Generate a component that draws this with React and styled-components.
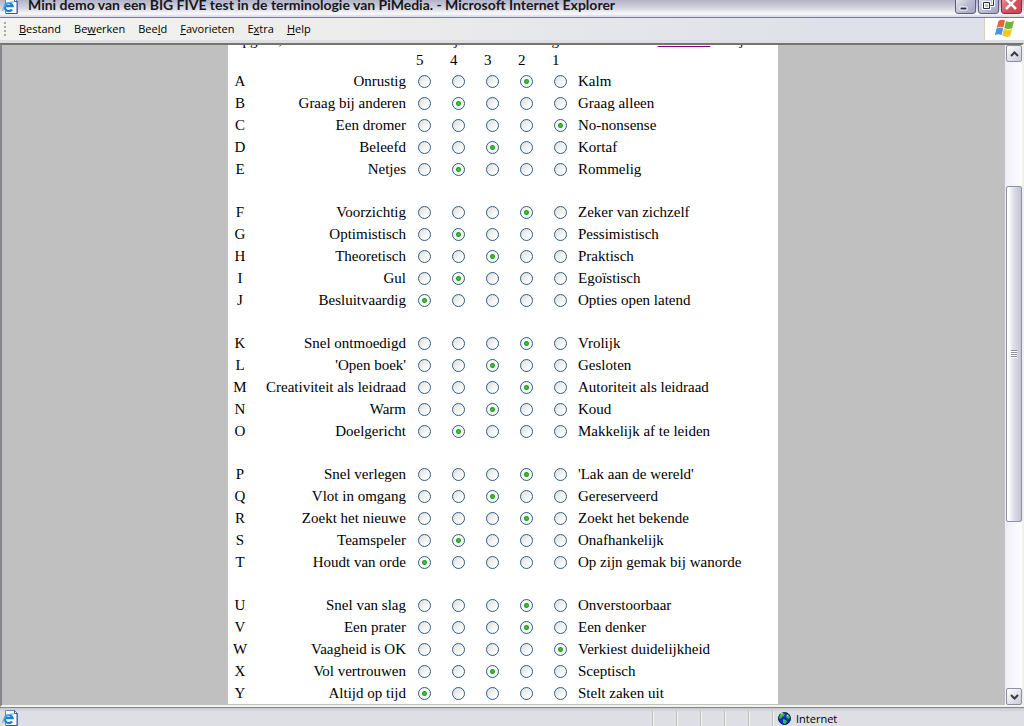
import React, { useState } from 'react'
import styled, { createGlobalStyle } from 'styled-components'

const GlobalStyle = createGlobalStyle`
    * {
        box-sizing: border-box;
    }
    body {
        margin: 0;
        overflow: hidden;
    }
    button {
        font: inherit;
        color: inherit;
        padding: 0;
    }
`

const Window = styled.div`
    display: flex;
    flex-direction: column;
    height: 100vh;
    background: #dedfe5;
    font-family: "Open Sans", Tahoma, sans-serif;
    font-size: 11px;
    color: #000;
`

const TitleBar = styled.header`
    display: flex;
    align-items: flex-end;
    flex: none;
    height: 18px;
    padding: 0 2px 3px;
    overflow: hidden;
    background: linear-gradient(#b3b3c8 0, #cfcfdc 7px, #fafafc 14px, #dcdce6 16px);
    border-bottom: 1px solid #7d7d96;
`

const Title = styled.h1`
    flex: 1;
    margin: 0 0 0 10px;
    font: bold 14px/18px Lato, sans-serif;
    color: #17171c;
    white-space: nowrap;
`

const WindowButtons = styled.div`
    display: flex;
    gap: 2px;
`

const WindowButton = styled.button`
    display: flex;
    width: 21px;
    height: 21px;
    border: 1px solid ${({ $close }) => ($close ? '#7d3048' : '#5e5e80')};
    border-radius: 3px;
    background: ${({ $close }) =>
        $close
            ? 'linear-gradient(135deg, #f0a0a0, #d4505a 60%, #c84650)'
            : 'linear-gradient(135deg, #f4f4fa, #b9b9cf 60%, #a3a3bf)'};
`

const MenuBar = styled.nav`
    display: flex;
    align-items: stretch;
    flex: none;
    height: 22px;
    background: linear-gradient(90deg, #f3f4ee, #ebebeb 40%, #dfe1ea 80%);
`

const Grip = styled.span`
    width: 2px;
    margin: 4px 13px 4px 4px;
    background: repeating-linear-gradient(#a9a9a4 0 2px, transparent 2px 4px);
`

const Menus = styled.div`
    display: flex;
    align-items: center;
    gap: 13px;
    flex: 1;
`

const MenuItem = styled.button`
    border: none;
    background: none;
    line-height: 16px;
`

const Brand = styled.div`
    display: flex;
    justify-content: center;
    width: 40px;
    border-left: 1px solid #d8cfb8;
    background: #fff;
`

const Viewport = styled.div`
    display: flex;
    flex: 1;
    min-height: 0;
    margin-top: 3px;
    border: solid;
    border-width: 2px 2px 2px 2px;
    border-color: #75756a #f0f0ea #f4f4ee #85858a;
`

const Canvas = styled.main`
    flex: 1;
    padding-right: 1px;
    overflow: hidden;
    background: #c0c0c0;
`

const Page = styled.form`
    max-width: 550px;
    margin: 0 auto;
    background: #fff;
    font: 15px/18px "Liberation Serif", "Times New Roman", serif;
`

const Intro = styled.div`
    display: flex;
    align-items: flex-end;
    height: 4px;
    padding: 0 7px;
    overflow: hidden;
    white-space: nowrap;

    p {
        margin: 0;
    }
    a {
        color: #800080;
    }
`

const Table = styled.table`
    width: 100%;
    table-layout: fixed;
    border-collapse: collapse;

    th, td {
        height: 22px;
        padding: 0;
        font-weight: normal;
        text-align: left;
        white-space: nowrap;
    }
    thead th, thead td, tbody + tbody tr:first-child > * {
        height: 21px;
    }
`

const Col = styled.col`
    width: ${({ $w }) => $w}px;
`

const Letter = styled.th`
    && {
        text-align: center;
    }
`

const LeftTerm = styled.td`
    && {
        padding-right: 10px;
        text-align: right;
    }
`

const Radio = styled.input`
    display: block;
    appearance: none;
    width: 13px;
    height: 13px;
    margin: 0 0 0 2px;
    border: 1px solid #2f5c8a;
    border-radius: 50%;
    background: linear-gradient(135deg, #dcdcd7, #fff 80%);

    &:checked {
        background: radial-gradient(circle, #4ccb48 0, #22a022 2px, transparent 3px), #f6f6f3;
    }
`

const ScrollBar = styled.div`
    display: flex;
    flex-direction: column;
    width: 17px;
    padding-left: 1px;
    background: linear-gradient(90deg, #eeeef6, #fdfdff);
`

const ScrollButton = styled.button`
    display: flex;
    align-items: center;
    justify-content: center;
    height: 17px;
    border: 1px solid #8e8ea3;
    border-radius: 2px;
    background: linear-gradient(135deg, #fff, #c9c9da);
`

const Track = styled.div`
    flex: ${({ $part }) => $part} 1 0;
`

const Thumb = styled.div`
    display: flex;
    align-items: center;
    justify-content: center;
    flex: 335 1 0;
    border: 1px solid #8e8ea3;
    border-radius: 2px;
    background: linear-gradient(90deg, #fff 10%, #dcdce9 50%, #c4c4d6);

    &::after {
        content: '';
        width: 6px;
        height: 8px;
        background: repeating-linear-gradient(#8c8ca3 0 1px, #fff 1px 2px);
    }
`

const StatusBar = styled.footer`
    display: flex;
    flex: none;
    height: 19px;
    border-top: 1px solid #85858a;
    background: linear-gradient(#c8c8cf, #dedfe5 4px);
`

const StatusText = styled.div`
    display: flex;
    align-items: flex-end;
    flex: 1;
    padding-left: 2px;
`

const StatusCell = styled.div`
    width: 24px;
    margin-top: 3px;
    border-left: 1px solid #c3c0b8;
    box-shadow: inset 1px 0 #f2f2f2;
`

const Zone = styled(StatusCell)`
    display: flex;
    align-items: center;
    gap: 5px;
    width: 252px;
    padding-left: 5px;
`

const groups = [
    [
        ['A', 'Onrustig', 'Kalm', 2],
        ['B', 'Graag bij anderen', 'Graag alleen', 4],
        ['C', 'Een dromer', 'No-nonsense', 1],
        ['D', 'Beleefd', 'Kortaf', 3],
        ['E', 'Netjes', 'Rommelig', 4],
    ],
    [
        ['F', 'Voorzichtig', 'Zeker van zichzelf', 2],
        ['G', 'Optimistisch', 'Pessimistisch', 4],
        ['H', 'Theoretisch', 'Praktisch', 3],
        ['I', 'Gul', 'Egoïstisch', 4],
        ['J', 'Besluitvaardig', 'Opties open latend', 5],
    ],
    [
        ['K', 'Snel ontmoedigd', 'Vrolijk', 2],
        ['L', "'Open boek'", 'Gesloten', 3],
        ['M', 'Creativiteit als leidraad', 'Autoriteit als leidraad', 2],
        ['N', 'Warm', 'Koud', 3],
        ['O', 'Doelgericht', 'Makkelijk af te leiden', 4],
    ],
    [
        ['P', 'Snel verlegen', "'Lak aan de wereld'", 2],
        ['Q', 'Vlot in omgang', 'Gereserveerd', 3],
        ['R', 'Zoekt het nieuwe', 'Zoekt het bekende', 2],
        ['S', 'Teamspeler', 'Onafhankelijk', 4],
        ['T', 'Houdt van orde', 'Op zijn gemak bij wanorde', 5],
    ],
    [
        ['U', 'Snel van slag', 'Onverstoorbaar', 2],
        ['V', 'Een prater', 'Een denker', 2],
        ['W', 'Vaagheid is OK', 'Verkiest duidelijkheid', 1],
        ['X', 'Vol vertrouwen', 'Sceptisch', 3],
        ['Y', 'Altijd op tijd', 'Stelt zaken uit', 5],
    ],
]

const scores = [5, 4, 3, 2, 1]

// [before, access key, after]
const menus = [
    ['', 'B', 'estand'],
    ['Be', 'w', 'erken'],
    ['Bee', 'l', 'd'],
    ['', 'F', 'avorieten'],
    ['E', 'x', 'tra'],
    ['', 'H', 'elp'],
]

function PageIcon() {
    return (
        <svg width="16" height="16" viewBox="0 0 16 16" aria-hidden="true">
            <path d="M3.5.5h9l3 3v12h-12z" fill="#fff" stroke="#6d86b8" />
            <path d="M12.5.5v3h3M15 4v11.500H4" fill="none" stroke="#3f558f" />
            <path d="M10 11.500a4 4 0 1 1 .7-3.300H4" fill="none" stroke="#1c7fd6" strokeWidth="2.200" />
            <path d="M1 13C0 9 6 3 12 4" fill="none" stroke="#5cb9f0" strokeWidth="1.200" />
        </svg>
    )
}

function WindowsFlag() {
    return (
        <svg width="22" height="20" viewBox="0 0 22 20" aria-hidden="true">
            <path d="M4.500 3C7 1 9 1.500 11 2.500L9.400 9.500C7 8.500 5 8.500 2.600 10z" fill="#e8633a" />
            <path d="M12 3c3 1.500 5 1.300 8-.3L18.300 10c-2.500 1.500-5 1.500-8 0z" fill="#6fb536" />
            <path d="M2.400 10.800c2.300-1.500 4.300-1.500 6.800-.5L7.600 17C5 16 3 16 .8 17.300z" fill="#4b93e0" />
            <path d="M10 10.800c3 1.500 5.500 1.500 8.100.2L16.300 18c-2.600 1.500-5 1.300-8-.4z" fill="#f7c52c" />
        </svg>
    )
}

function Globe() {
    return (
        <svg width="13" height="13" viewBox="0 0 13 13" aria-hidden="true">
            <circle cx="6.500" cy="6.500" r="6" fill="#1226d6" stroke="#0a1650" />
            <path d="M2 2.500L5 1l2 1-1 2-2 1-1 2-2-1zM7.500 4L10 2l2 3-1 2-2-1zM5 7l3 1 1 2-2 2-2-1z" fill="#35c235" />
            <path d="M3 2l2-1M9 4l1-1" stroke="#c6f5b8" />
        </svg>
    )
}

function Chevron({ up }) {
    return (
        <svg width="9" height="6" viewBox="0 0 9 6" aria-hidden="true">
            <path d={up ? 'M1 5l3.500-3.500L8 5' : 'M1 1l3.500 3.500L8 1'} fill="none" stroke="#3a3a42" strokeWidth="2" />
        </svg>
    )
}

function Row({ row, value, onChange }) {
    const [letter, left, right] = row
    return (
        <tr>
            <Letter scope="row">{letter}</Letter>
            <LeftTerm>{left}</LeftTerm>
            {scores.map((score) => (
                <td key={score}>
                    <Radio
                        type="radio"
                        name={letter}
                        value={score}
                        aria-label={`${left} - ${right}: ${score}`}
                        checked={value === score}
                        onChange={() => onChange(letter, score)}
                    />
                </td>
            ))}
            <td>{right}</td>
        </tr>
    )
}

export default function App() {
    const [answers, setAnswers] = useState(() =>
        Object.fromEntries(groups.flat().map(([letter, , , score]) => [letter, score]))
    )

    const handleChange = (letter, score) => {
        setAnswers({ ...answers, [letter]: score })
    }

    return (
        <Window>
            <GlobalStyle />
            <TitleBar>
                <PageIcon />
                <Title>Mini demo van een BIG FIVE test in de terminologie van PiMedia. - Microsoft Internet Explorer</Title>
                <WindowButtons>
                    <WindowButton type="button" aria-label="Minimaliseren">
                        <svg width="19" height="19"><path d="M4 13h7v3H4z" fill="#2c2c4c" stroke="#fff" /></svg>
                    </WindowButton>
                    <WindowButton type="button" aria-label="Verkleinen">
                        <svg width="19" height="19" fill="none">
                            <path d="M7.500 4.500h7v7h-3M4.500 8.500h6v6h-6z" stroke="#fff" strokeWidth="3" />
                            <path d="M7.500 4.500h7v7h-3M4.500 8.500h6v6h-6z" stroke="#2c2c4c" />
                        </svg>
                    </WindowButton>
                    <WindowButton type="button" aria-label="Sluiten" $close>
                        <svg width="19" height="19"><path d="M4 5l10 10M14 5L4 15" stroke="#fff" strokeWidth="2.500" /></svg>
                    </WindowButton>
                </WindowButtons>
            </TitleBar>
            <MenuBar>
                <Grip />
                <Menus>
                    {menus.map(([before, key, after]) => (
                        <MenuItem type="button" key={before + key}>{before}<u>{key}</u>{after}</MenuItem>
                    ))}
                </Menus>
                <Brand><WindowsFlag /></Brand>
            </MenuBar>
            <Viewport>
                <Canvas>
                    <Page>
                        <Intro>
                            <p>opgave, en kies daarna een van de cijfers die u heeft gekozen naast de <a href="#test">woorden</a> van je</p>
                        </Intro>
                        <Table>
                            <colgroup>
                                <Col $w={24} />
                                <Col $w={164} />
                                <Col $w={34} />
                                <Col $w={34} />
                                <Col $w={34} />
                                <Col $w={34} />
                                <Col $w={26} />
                                <col />
                            </colgroup>
                            <thead>
                                <tr>
                                    <td colSpan={2} />
                                    {scores.map((score) => <th scope="col" key={score}>{score}</th>)}
                                    <td />
                                </tr>
                            </thead>
                            {groups.map((rows, i) => (
                                <tbody key={i}>
                                    {i > 0 && <tr><td colSpan={8} /></tr>}
                                    {rows.map((row) => (
                                        <Row key={row[0]} row={row} value={answers[row[0]]} onChange={handleChange} />
                                    ))}
                                </tbody>
                            ))}
                        </Table>
                    </Page>
                </Canvas>
                <ScrollBar>
                    <ScrollButton type="button" aria-label="Omhoog"><Chevron up /></ScrollButton>
                    <Track $part={124} />
                    <Thumb />
                    <Track $part={166} />
                    <ScrollButton type="button" aria-label="Omlaag"><Chevron /></ScrollButton>
                </ScrollBar>
            </Viewport>
            <StatusBar>
                <StatusText><PageIcon /></StatusText>
                <StatusCell />
                <StatusCell />
                <StatusCell />
                <StatusCell />
                <StatusCell />
                <Zone><Globe />Internet</Zone>
            </StatusBar>
        </Window>
    )
}
